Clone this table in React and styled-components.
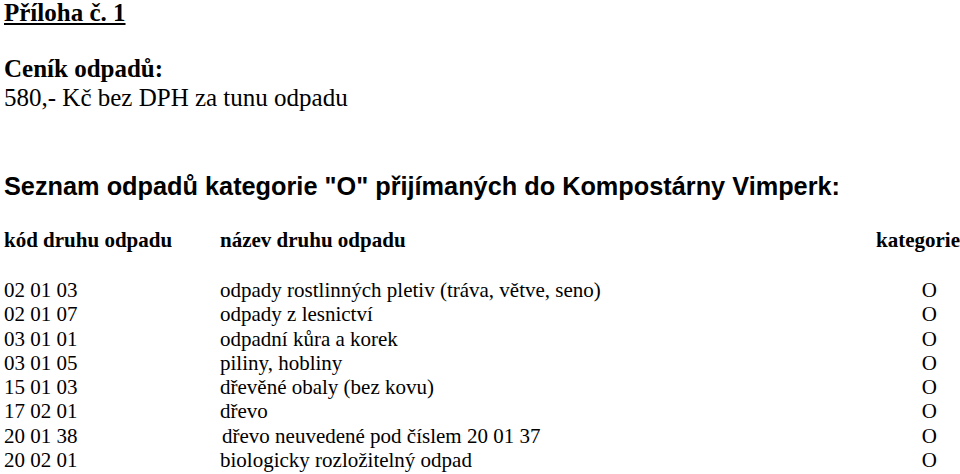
import React from "react";
import styled, { createGlobalStyle } from "styled-components";

const GlobalStyle = createGlobalStyle`
  html, body {
    margin: 0;
    padding: 0;
    background: #ffffff;
  }
  body {
    color: #000000;
    font-family: "Liberation Serif", "Times New Roman", serif;
  }
`;

const Page = styled.div`
  width: 960px;
  box-sizing: border-box;
  padding: 0 0 0 4px;
`;

const Title = styled.h1`
  margin: 0;
  font-size: 25px;
  line-height: 26px;
  font-weight: 700;
  text-decoration: underline;
  text-decoration-thickness: 2px;
  text-underline-offset: 2px;
`;

const Price = styled.section`
  margin-top: 28px;
  font-size: 25px;
  line-height: 29px;
`;

const PriceTitle = styled.div`
  font-weight: 700;
`;

const ListHeading = styled.h2`
  margin: 60px 0 0;
  font-family: "Liberation Sans", Arial, sans-serif;
  font-size: 25.3px;
  line-height: 29px;
  font-weight: 700;
`;

const Table = styled.div`
  margin-top: 27px;
  display: grid;
  grid-template-columns: 216px 1fr auto;
  font-size: 21px;
`;

const HeadCell = styled.div`
  font-weight: 700;
  line-height: 24px;
  margin-bottom: 26px;
  text-align: ${({ $align }) => $align || "left"};
`;

const Cell = styled.div`
  line-height: 24.3px;
  white-space: nowrap;
  padding-left: ${({ $indent }) => $indent || 0}px;
`;

const CategoryCell = styled(Cell)`
  justify-self: end;
  padding-right: 23px;
`;

const rows = [
  ["02 01 03", "odpady rostlinných pletiv (tráva, větve, seno)"],
  ["02 01 07", "odpady z lesnictví"],
  ["03 01 01", "odpadní kůra a korek"],
  ["03 01 05", "piliny, hobliny"],
  ["15 01 03", "dřevěné obaly (bez kovu)"],
  ["17 02 01", "dřevo"],
  ["20 01 38", "dřevo neuvedené pod číslem 20 01 37", 2],
  ["20 02 01", "biologicky rozložitelný odpad"],
];

const App = () => {
  return (
    <>
      <GlobalStyle />
      <Page>
        <Title>Příloha č. 1</Title>
        <Price>
          <PriceTitle>Ceník odpadů:</PriceTitle>
          <div>580,- Kč bez DPH za tunu odpadu</div>
        </Price>
        <ListHeading>
          Seznam odpadů kategorie "O" přijímaných do Kompostárny Vimperk:
        </ListHeading>
        <Table>
          <HeadCell>kód druhu odpadu</HeadCell>
          <HeadCell>název druhu odpadu</HeadCell>
          <HeadCell $align="right">kategorie</HeadCell>
          {rows.map(([code, name, indent]) => (
            <React.Fragment key={code}>
              <Cell>{code}</Cell>
              <Cell $indent={indent}>{name}</Cell>
              <CategoryCell>O</CategoryCell>
            </React.Fragment>
          ))}
        </Table>
      </Page>
    </>
  );
};

export default App;
